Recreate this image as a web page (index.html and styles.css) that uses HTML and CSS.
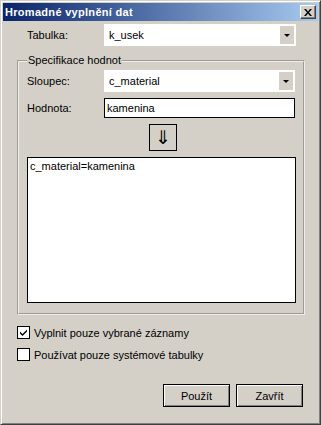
FILE: index.html
```html
<!DOCTYPE html>
<html lang="cs">
<head>
  <meta charset="UTF-8" />
  <title>Hromadné vyplnění dat</title>
  <link rel="stylesheet" href="styles.css">
</head>
<body>

  <div class="window">
    <div class="title-bar">
      <span class="title">Hromadné vyplnění dat</span>
      <button class="close-btn" aria-label="Zavřít">
        <svg width="8" height="7" viewBox="0 0 8 7"><path d="M0 0h2l2 2.5L6 0h2L5 3.5 8 7H6L4 4.5 2 7H0l3-3.5z" fill="#000"/></svg>
      </button>
    </div>

    <div class="content">
      <div class="row top-row">
        <label class="label">Tabulka:</label>
        <div class="combo">
          <span class="combo-value">k_usek</span>
          <span class="combo-btn"><i class="tri"></i></span>
        </div>
      </div>

      <fieldset class="group">
        <legend>Specifikace hodnot</legend>

        <div class="row">
          <label class="label">Sloupec:</label>
          <div class="combo">
            <span class="combo-value">c_material</span>
            <span class="combo-btn"><i class="tri"></i></span>
          </div>
        </div>

        <div class="row value-row">
          <label class="label">Hodnota:</label>
          <div class="textbox">kamenina</div>
        </div>

        <div class="arrow-row">
          <button class="arrow-btn">⇓</button>
        </div>

        <div class="listbox">c_material=kamenina</div>
      </fieldset>

      <div class="check-row first">
        <span class="checkbox">
          <svg width="7" height="7" viewBox="0 0 7 7"><path d="M0 2.5l2.5 2.5L7 0.5v2L2.5 7 0 4.5z" fill="#000"/></svg>
        </span>
        <span>Vyplnit pouze vybrané záznamy</span>
      </div>
      <div class="check-row">
        <span class="checkbox"></span>
        <span>Používat pouze systémové tabulky</span>
      </div>

      <div class="buttons">
        <button class="btn">Použít</button>
        <button class="btn">Zavřít</button>
      </div>
    </div>
  </div>

</body>
</html>
```

FILE: styles.css
```css
body {
  margin: 0;
  font-family: 'Liberation Sans', Arial, sans-serif;
  font-size: 11px;
  color: #000;
}
.window {
  width: 321px;
  height: 425px;
  box-sizing: border-box;
  background: #d4d0c8;
  border: 1px solid;
  border-color: #d4d0c8 #404040 #404040 #d4d0c8;
  box-shadow: inset 1px 1px #fff, inset -1px -1px #808080;
  padding: 2px 2px 3px 2px;
  display: flex;
  flex-direction: column;
}
.title-bar {
  height: 18px;
  flex: none;
  display: flex;
  align-items: center;
  justify-content: space-between;
  padding: 0 2px 0 2px;
  background: linear-gradient(to right, #0a246a, #a6caf0);
}
.title {
  color: #fff;
  font-weight: bold;
  font-size: 11px;
  letter-spacing: 0.3px;
}
.close-btn {
  width: 16px;
  height: 14px;
  padding: 0;
  border: 1px solid;
  border-color: #fff #404040 #404040 #fff;
  box-shadow: inset -1px -1px #808080;
  background: #d4d0c8;
  display: flex;
  align-items: center;
  justify-content: center;
}
.content {
  flex: 1;
  padding: 0 13px 0 14px;
  display: flex;
  flex-direction: column;
}
.row {
  display: flex;
  align-items: center;
  padding-left: 10px;
}
.top-row {
  margin-top: 3px;
}
.label {
  width: 77px;
  flex: none;
}
.combo {
  width: 192px;
  height: 22px;
  box-sizing: border-box;
  background: #fff;
  display: flex;
  align-items: stretch;
  padding: 1px;
}
.combo-value {
  flex: 1;
  padding-left: 4px;
  display: flex;
  align-items: center;
}
.combo-btn {
  width: 16px;
  box-sizing: border-box;
  background: #d4d0c8;
  border: 1px solid #fff;
  display: flex;
  align-items: center;
  justify-content: center;
}
.tri {
  width: 0;
  height: 0;
  border-left: 3px solid transparent;
  border-right: 3px solid transparent;
  border-top: 3px solid #000;
  margin-top: 1px;
}
.group {
  margin: 8px 0 0 0;
  padding: 3px 8px 10px 8px;
  border: 2px groove #f0eee8;
  min-width: 0;
}
.group legend {
  padding: 0 1px;
  margin-left: 0;
  line-height: 13px;
}
.group .row {
  padding-left: 0;
}
.group .label {
  width: 77px;
}
.value-row {
  margin-top: 6px;
}
.textbox {
  width: 192px;
  height: 20px;
  box-sizing: border-box;
  background: #fff;
  border: 1px solid #000;
  padding-left: 2px;
  display: flex;
  align-items: center;
}
.arrow-row {
  display: flex;
  padding-left: 122px;
  margin-top: 6px;
}
.arrow-btn {
  width: 28px;
  height: 27px;
  padding: 0;
  border: 1px solid #000;
  background: #d4d0c8;
  font-family: 'DejaVu Sans', sans-serif;
  font-size: 19px;
  font-weight: normal;
  line-height: 1;
  color: #000;
}
.listbox {
  margin-top: 6px;
  height: 146px;
  width: 269px;
  box-sizing: border-box;
  background: #fff;
  border: 1px solid #000;
  padding: 2px 2px;
}
.check-row {
  display: flex;
  align-items: center;
  gap: 4px;
  height: 13px;
  margin-top: 9px;
}
.check-row.first {
  margin-top: 11px;
}
.checkbox {
  width: 13px;
  height: 13px;
  box-sizing: border-box;
  flex: none;
  border: 1px solid #000;
  background: #fff;
  display: flex;
  align-items: center;
  justify-content: center;
}
.buttons {
  display: flex;
  justify-content: flex-end;
  gap: 6px;
  margin-top: 23px;
  padding-right: 2px;
}
.btn {
  width: 67px;
  height: 23px;
  padding: 0;
  border: 1px solid #000;
  background: #d4d0c8;
  box-shadow: inset 1px 1px #fff, inset -1px -1px #808080;
  font-family: 'Liberation Sans', Arial, sans-serif;
  font-size: 11px;
  color: #000;
}
```
